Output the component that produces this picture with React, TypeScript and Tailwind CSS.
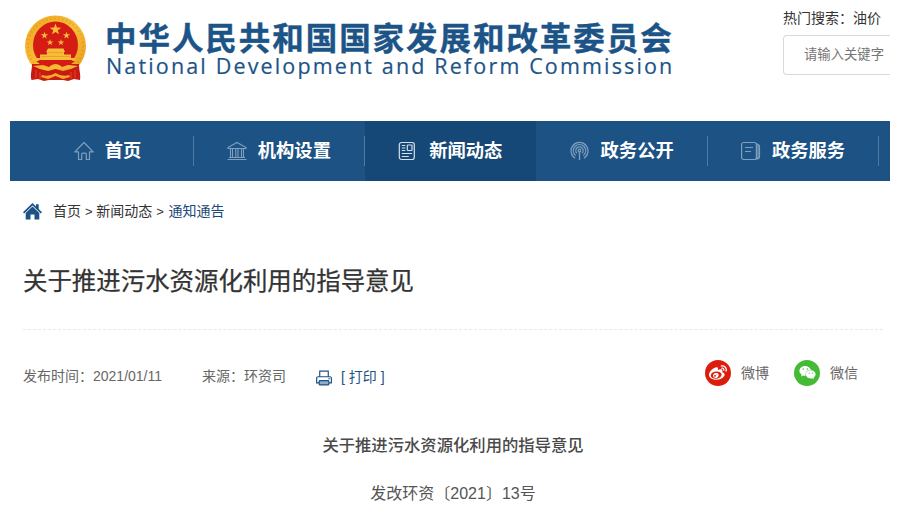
import React from "react";
import { FaWeibo, FaWeixin } from "react-icons/fa";

const sans = "font-['Liberation_Sans','Noto_Sans_CJK_SC',sans-serif]";

function Emblem() {
  const star = "M0 -1 L.23 -.32 L.95 -.31 L.37 .12 L.59 .81 L0 .4 L-.59 .81 L-.37 .12 L-.95 -.31 L-.23 -.32Z";
  return (
    <svg className="h-[68px] w-[64px] shrink-0" viewBox="0 0 64 68">
      <defs>
        <linearGradient id="gold" x1="0" y1="0" x2="1" y2="1">
          <stop offset="0" stopColor="#efa51e" />
          <stop offset=".5" stopColor="#f8bd38" />
          <stop offset="1" stopColor="#e6981a" />
        </linearGradient>
      </defs>
      <ellipse cx="31.500" cy="31" rx="30.500" ry="30.500" fill="url(#gold)" />
      <ellipse cx="31.500" cy="31" rx="27.500" ry="27.500" fill="none" stroke="#d98312" strokeWidth="2" strokeDasharray="1.500 2.500" opacity=".4" />
      <path d="M8 49C8 56 6 59 7.500 65L14 64 20 66 25 65H39L44 66 50 64 56 65C57 59 55 56 55 49Z" fill="#c81a12" />
      <ellipse cx="31.500" cy="30" rx="22.500" ry="23.500" fill="#d41c14" />
      <g fill="#f8bd38">
        <path d={star} transform="translate(31.500 14.500) scale(6)" />
        <path d={star} transform="translate(20.500 20.500) scale(3.800)" />
        <path d={star} transform="translate(42.500 20.500) scale(3.800)" />
        <path d={star} transform="translate(26 27.500) scale(3.400)" />
        <path d={star} transform="translate(37 27.500) scale(3.400)" />
        <path d="M24 33.500H39.500L41 37H40V39.500H47V43H51V45H12V43H16V39.500H23V37H22Z" />
      </g>
      <path d="M24 37.500H39M17 41.500H46" stroke="#e39a20" strokeWidth=".8" />
      <path d="M12 46H51L46 50 40 51H23L17 50Z" fill="#d41c14" />
      <path d="M9 51L19 50 25 52C29 48 34 48 38 52L44 50 54 51 47 54 39 56 31.500 54 24 56 16 54Z" fill="url(#gold)" />
      <path d="M18 60Q25 62 31.500 58Q38 62 45 60L46 62 39 64 31.500 61 24 64 17 62Z" fill="#f3ab2a" />
      <path d="M12 55V63M16 57V64M47 57V64M51 55V63" stroke="#e34622" strokeWidth="1" />
    </svg>
  );
}

const HomeIcon = () => (
  <svg className="h-5 w-5" viewBox="0 0 20 20" fill="none" stroke="currentColor" strokeWidth="1.200">
    <path d="M.8 10.800L10 1.500l9.200 9.300h-3.700v7.700h-3.200v-5.300q0-1-1-1H8.700q-1 0-1 1v5.300H4.500v-7.700Z" strokeLinejoin="round" />
  </svg>
);
const BankIcon = () => (
  <svg className="h-5 w-5" viewBox="0 0 20 20" fill="none" stroke="currentColor" strokeWidth="1.100">
    <path d="M1 6.500L10 1.500l9 5V7.500H1ZM2 16.500H18M.5 18.500H19.500M3.500 7.500v9M5.500 7.500v9M8.800 7.500v9M11 7.500v9M14.500 7.500v9M16.500 7.500v9" />
  </svg>
);
const NewsIcon = () => (
  <svg className="h-5 w-5" viewBox="0 0 20 20" fill="none" stroke="currentColor" strokeWidth="1.200">
    <rect x="1.300" y="1.500" width="15" height="17" rx="2.200" />
    <rect x="9.300" y="4" width="4.700" height="5.500" rx=".8" />
    <path d="M3.800 4.500H7.300M3.800 7H7.300M3.800 9.500H7.300M3.800 12.500H14M3.800 15.500H10.800" />
  </svg>
);
const SignalIcon = () => (
  <svg className="h-5 w-5" viewBox="0 0 20 20" fill="none" stroke="currentColor" strokeWidth="1.200">
    <path d="M5.200 17.300A8.500 8.500 0 1 1 13.800 17.300M5.700 14.600A6.200 6.200 0 1 1 13.300 14.600M7 12.300A3.700 3.700 0 1 1 12 12.300" />
    <circle cx="9.500" cy="9.500" r="1.300" />
    <path d="M9.500 10.500V19" strokeWidth="1.400" />
  </svg>
);
const ServiceIcon = () => (
  <svg className="h-5 w-5" viewBox="0 0 20 20" fill="none" stroke="currentColor" strokeWidth="1.200">
    <rect x=".6" y="1.500" width="14.800" height="17" rx="2" />
    <path d="M4 6.500H12M4 10.500H10M15 2.500q2 0 2 2v11.500q0 2-2 2M16.500 3.500q2 0 2 2v10q0 2.200-2.500 2.500" />
  </svg>
);

const items = [
  { label: "首页", Icon: HomeIcon },
  { label: "机构设置", Icon: BankIcon },
  { label: "新闻动态", Icon: NewsIcon, active: true },
  { label: "政务公开", Icon: SignalIcon },
  { label: "政务服务", Icon: ServiceIcon },
];

function Header() {
  return (
    <header className="flex h-[121px] items-start">
      <div className="flex pl-[14px] pt-[15px]">
        <Emblem />
        <div className="ml-[17px] w-[585px] whitespace-nowrap pt-[8px] text-[#1c5487]">
          <div className="text-[31.500px] font-bold leading-[32px] tracking-[1.950px] [-webkit-text-stroke:0.4px_#1c5487]">中华人民共和国国家发展和改革委员会</div>
          <div className="pl-px font-['Open_Sans',sans-serif] text-[21.500px] leading-[21px] tracking-[2.150px] [-webkit-text-stroke:0.2px_#1c5487]">National Development and Reform Commission</div>
        </div>
      </div>
      <div className="ml-auto w-[107px] shrink-0 overflow-hidden pt-2 text-[14px] leading-5 text-[#333]">
        <div className="whitespace-nowrap">热门搜索：油价</div>
        <div className="mt-[7px] flex h-10 items-center whitespace-nowrap rounded-l-[4px] border border-r-0 border-[#d9d9d9] pl-5 text-[13.330px] text-[#757575]">请输入关键字</div>
      </div>
    </header>
  );
}

function Nav() {
  return (
    <nav className="flex h-[60px] bg-[#1c5284] pl-[12.300px]">
      {items.map(({ label, Icon, active }) => (
        <div key={label} className={`flex w-[171.400px] items-center ${active ? "bg-[#154876]" : ""}`}>
          <div className="flex flex-1 items-center justify-center gap-[11px]">
            <span className={active ? "text-[#d5e0ea]" : "text-[#7f9fbd]"}><Icon /></span>
            <span className="whitespace-nowrap text-[18.300px] font-bold leading-7 text-white">{label}</span>
          </div>
          <span className={`h-[30px] w-px ${active ? "" : "bg-[#4f7ba3]"}`} />
        </div>
      ))}
    </nav>
  );
}

export default function App() {
  return (
    <div className={`h-[520px] w-[900px] overflow-hidden bg-white px-[10px] ${sans}`}>
      <Header />
      <Nav />
      <main className="pl-[13px] pr-[7px] text-[14px] text-[#666]">
        <div className="flex h-[60px] items-center whitespace-nowrap text-[#333]">
          <svg className="mr-[11px] h-[17px] w-[19px]" viewBox="0 0 19 17" fill="#1c5284">
            <path d="M9.500 0L13 3.400V1.200h2.700V6L19 9.200 17.800 10.400 9.500 2.500 1.200 10.400 0 9.200ZM9.500 3.500L16.300 10V16.500H11.500V11.500H7.500V16.500H2.700V10Z" />
          </svg>
          <span>首页 <span className="text-[13px]">&gt;</span> 新闻动态 <span className="text-[13px]">&gt;</span> <span className="ml-[0.800px] text-[#1c4a78]">通知通告</span></span>
        </div>
        <h1 className="h-[89px] border-b border-dashed border-[#e8e8e8] pt-[21px] text-[24.450px] leading-10 text-[#333] [-webkit-text-stroke:0.25px_#333]">关于推进污水资源化利用的指导意见</h1>
        <div className="flex h-[92px] items-center whitespace-nowrap">
          <span className="w-[179px]">发布时间：2021/01/11</span>
          <span className="w-[114px]">来源：环资司</span>
          <svg className="mr-[9px] mt-[3px] h-4 w-4" viewBox="0 0 15 15" fill="none" stroke="#1c5284" strokeWidth="1.100">
            <path d="M3.500 6V1H11.500V6M3 12H.6V7.500Q.6 6.300 2 6.300H13Q14.400 6.300 14.400 7.500V12H12" />
            <rect x="3" y="10" width="9" height="4" rx=".7" fill="#91aec9" />
            <path d="M11.500 8.200H13" />
          </svg>
          <span className="mt-[2px] text-[#1c5284]">[ 打印 ]</span>
          <div className="mb-[7px] ml-auto flex items-center pr-[25px]">
            <span className="flex size-[26px] items-center justify-center rounded-full bg-[#dc1d0c] text-[18px] text-white"><FaWeibo /></span>
            <span className="ml-[10px] pt-px">微博</span>
            <span className="ml-[25px] flex size-[26px] items-center justify-center rounded-full bg-[#45bb35] text-[17px] text-white"><FaWeixin /></span>
            <span className="ml-[10px] pt-px">微信</span>
          </div>
        </div>
        <div className="text-center leading-[48px]">
          <p className="-mt-px h-[49px] text-[16.330px] font-medium text-[#4a4a4a]">关于推进污水资源化利用的指导意见</p>
          <p className="text-[16px] text-[#555]">发改环资〔2021〕13号</p>
        </div>
      </main>
    </div>
  );
}
